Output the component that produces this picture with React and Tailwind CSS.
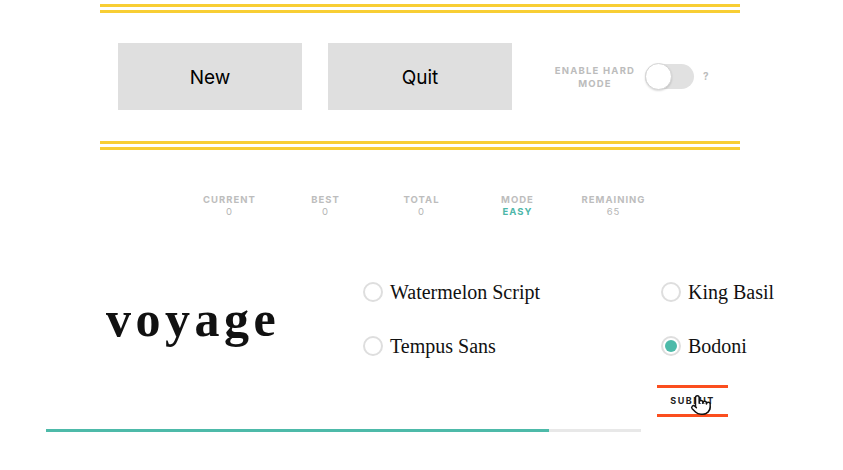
import { Pointer } from 'lucide-react';

const stats = [
  ['Current', '0'],
  ['Best', '0'],
  ['Total', '0'],
  ['Mode', 'Easy'],
  ['Remaining', '65'],
];

const options = [
  ['Watermelon Script', false],
  ['King Basil', false],
  ['Tempus Sans', false],
  ['Bodoni', true],
];

function Radio({ label, checked }) {
  return (
    <label className="flex h-[30px] items-center gap-[7px]">
      <span className="flex h-[20px] w-[20px] items-center justify-center rounded-full border-2 border-[#dedede] bg-white">
        {checked && <span className="h-[12px] w-[12px] rounded-full bg-[#4dbaa9]" />}
      </span>
      <span className="font-['Liberation_Serif',serif] text-[20px] leading-none text-[#111]">{label}</span>
    </label>
  );
}

export default function App() {
  return (
    <div className="min-h-[470px] bg-white pt-[4px] font-['Inter',sans-serif]">
      <div className="ml-[100px] w-[640px]">
        <div className="h-[9px] border-y-[3px] border-[#f8ce34]" />
        <div className="flex items-center pb-[31px] pl-[18px] pt-[30px]">
          <button className="h-[67px] w-[184px] bg-[#dfdfdf] pt-[3px] text-[19px] font-normal text-black">New</button>
          <button className="ml-[26px] h-[67px] w-[184px] bg-[#dfdfdf] pt-[3px] text-[19px] font-normal text-black">Quit</button>
          <div className="ml-[38px] w-[90px] text-center text-[9.5px] font-bold leading-[13px] tracking-[1.2px] text-[#bcbcbc]">
            ENABLE HARD<br />MODE
          </div>
          <div className="ml-[5px] flex h-[25px] w-[49px] items-center rounded-full bg-[#e1e1e1]">
            <span className="h-[27px] w-[27px] rounded-full border border-[#d4d4d4] bg-white shadow-[0_1px_2px_rgba(0,0,0,0.15)]" />
          </div>
          <span className="ml-[9px] text-[10px] font-bold text-[#bcbcbc]">?</span>
        </div>
        <div className="h-[9px] border-y-[3px] border-[#f8ce34]" />
      </div>

      <div className="mt-[44px] flex justify-center">
        {stats.map(([label, value]) => (
          <div key={label} className="w-[96px] text-center text-[9.5px] leading-[12px]">
            <div className="font-bold uppercase tracking-[1px] text-[#bdbdbd]">{label}</div>
            <div className={label === 'Mode' ? 'font-bold uppercase tracking-[1px] text-[#4db6a8]' : 'tracking-[1px] text-[#b5b5b5]'}>{value}</div>
          </div>
        ))}
      </div>

      <div className="mt-[59px] flex items-center">
        <div className="w-[363px] pl-[106px] font-['Liberation_Serif',serif] text-[50px] font-bold leading-none tracking-[4.5px] text-[#111]">
          voyage
        </div>
        <div className="grid grid-cols-[298px_auto] gap-y-[24px]">
          {options.map(([label, checked]) => (
            <Radio key={label} label={label} checked={checked} />
          ))}
        </div>
      </div>

      <div className="mt-[24px] pl-[657px]">
        <button className="relative flex h-[32px] w-[71px] items-center justify-center border-y-[3px] border-[#fb4e1e] text-[9px] font-bold tracking-[1.5px] text-[#222]">
          SUBMIT
          <Pointer className="absolute left-[33px] top-[6px]" size={22} fill="white" strokeWidth={1.6} color="#111" />
        </button>
      </div>

      <div className="ml-[46px] mt-[12px] h-[3px] w-[595px] bg-[#e8e8e8]">
        <div className="h-full w-[503px] bg-[#4dbaa9]" />
      </div>
    </div>
  );
}
